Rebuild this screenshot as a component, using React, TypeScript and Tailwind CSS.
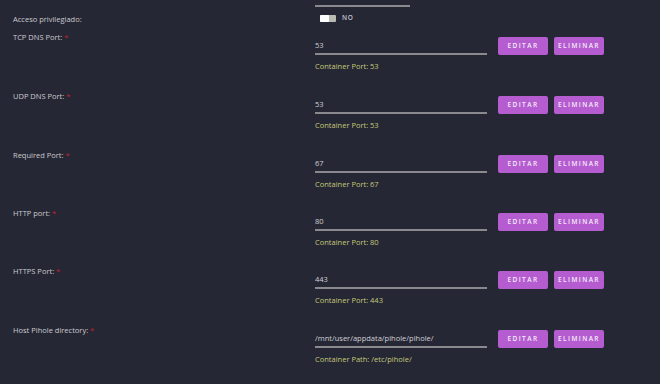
const ROWS = [
  { label: 'TCP DNS Port:', value: '53', note: 'Container Port: 53' },
  { label: 'UDP DNS Port:', value: '53', note: 'Container Port: 53' },
  { label: 'Required Port:', value: '67', note: 'Container Port: 67' },
  { label: 'HTTP port:', value: '80', note: 'Container Port: 80' },
  { label: 'HTTPS Port:', value: '443', note: 'Container Port: 443' },
  { label: 'Host Pihole directory:', value: '/mnt/user/appdata/pihole/pihole/', note: 'Container Path: /etc/pihole/' },
];

function Btn({ children }: { children: string }) {
  return (
    <button className="w-[50px] h-[18px] rounded-[2px] bg-[#b45cd0] text-[#f6ecfa] text-[6.5px] font-semibold tracking-[1.4px] leading-none">
      {children}
    </button>
  );
}

export default function App() {
  return (
    <div className="w-[660px] h-[384px] overflow-hidden bg-[#262734] font-['Open_Sans',sans-serif] text-[7.5px] text-[#cacad0]">
      {/* cut-off field above */}
      <div className="h-[7px] flex">
        <div className="w-[315px]" />
        <div className="w-[95px] border-b-2 border-[#8a8a8e]" />
      </div>

      {/* privileged toggle */}
      <div className="h-[26px] flex">
        <div className="w-[315px] pl-[13px] pt-[7px] leading-[10px]">Acceso privilegiado:</div>
        <div className="flex items-center gap-[6px] pl-[5px] h-[21px] pt-[1px]">
          <div className="w-[16px] h-[7px] bg-[#b8bcb2] rounded-[1px] flex">
            <div className="w-[9px] h-[7px] bg-white rounded-[1px]" />
          </div>
          <span className="text-[6.5px] font-semibold tracking-[0.6px] text-[#c0c0c8]">NO</span>
        </div>
      </div>

      {ROWS.map((r, i) => (
        <div key={i} className={`${i === 2 || i === 3 ? 'h-[58px]' : 'h-[59px]'} flex`}>
          <div className="w-[315px] pl-[13px] leading-[9px]">
            {r.label} <span className="text-[#c0232e]">*</span>
          </div>
          <div className="pt-[4px]">
            <div className="flex items-start">
              <div className="w-[172px] h-[18px] border-b-2 border-[#8a8a8e] pt-[3px] leading-[10px] text-[#d0d0d6]">
                {r.value}
              </div>
              <div className="ml-[11px] flex gap-[6px]">
                <Btn>EDITAR</Btn>
                <Btn>ELIMINAR</Btn>
              </div>
            </div>
            <div className="mt-[6px] leading-[10px] text-[#c3c77a]">{r.note}</div>
          </div>
        </div>
      ))}
    </div>
  );
}
